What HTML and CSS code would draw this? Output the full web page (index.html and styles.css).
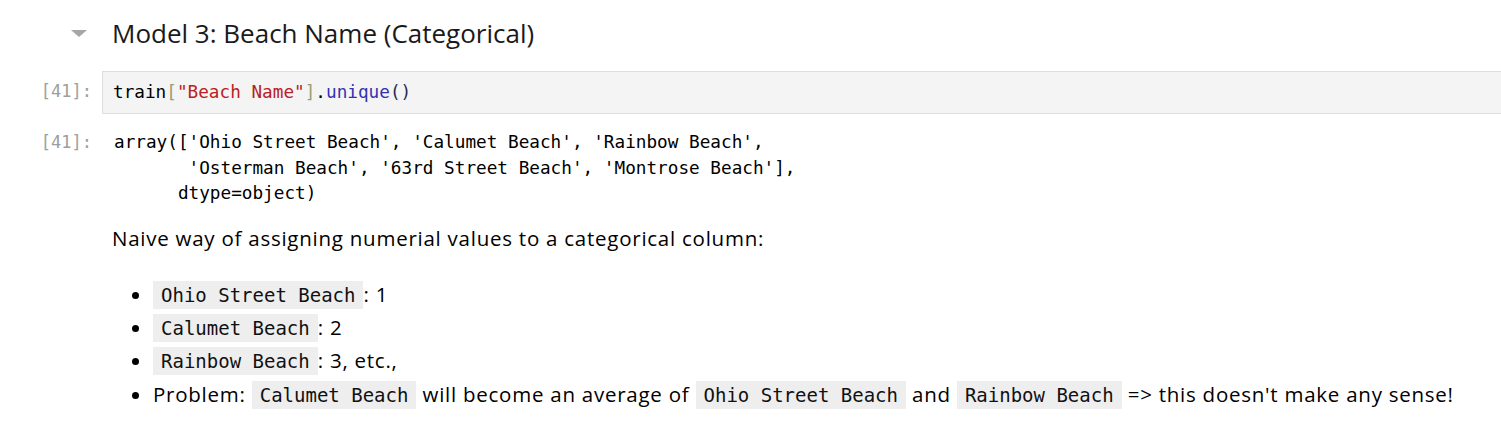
FILE: index.html
```html
<!DOCTYPE html>
<html>
<head>
<meta charset="utf-8">
<link rel="stylesheet" href="styles.css">
</head>
<body>
<div class="notebook">
  <div class="cell heading-cell">
    <div class="prompt"><span class="collapser"></span></div>
    <h2 class="heading">Model 3: Beach Name (Categorical)</h2>
  </div>

  <div class="cell code-cell">
    <div class="prompt">[41]:</div>
    <div class="code-box"><pre class="code"><span class="v">train</span><span class="br">[</span><span class="s">"Beach Name"</span><span class="br">]</span><span class="op">.</span><span class="fn">unique</span><span class="pa">()</span></pre></div>
  </div>

  <div class="cell output-cell">
    <div class="prompt">[41]:</div>
    <pre class="output">array(['Ohio Street Beach', 'Calumet Beach', 'Rainbow Beach',
       'Osterman Beach', '63rd Street Beach', 'Montrose Beach'],
      dtype=object)</pre>
  </div>

  <div class="cell md-cell">
    <div class="prompt"></div>
    <div class="md">
      <p class="para">Naive way of assigning numerial values to a categorical column:</p>
      <ul class="list">
        <li><code>Ohio Street Beach</code>: 1</li>
        <li><code>Calumet Beach</code>: 2</li>
        <li><code>Rainbow Beach</code>: 3, etc.,</li>
        <li>Problem: <code>Calumet Beach</code> will become an average of <code>Ohio Street Beach</code> and <code>Rainbow Beach</code> =&gt; this doesn't make any sense!</li>
      </ul>
    </div>
  </div>
</div>
</body>
</html>
```

FILE: styles.css
```css
html, body {
  margin: 0;
  padding: 0;
  background: #ffffff;
}

body {
  font-family: "Open Sans", "Noto Sans", sans-serif;
  color: #1a1a1a;
  overflow: hidden;
}

.notebook {
  display: flex;
  flex-direction: column;
  padding-top: 12px;
}

.cell {
  display: flex;
  align-items: flex-start;
}

.prompt {
  width: 92px;
  flex: none;
  padding-right: 10px;
  text-align: right;
  font-family: "DejaVu Sans Mono", monospace;
  font-size: 17px;
  color: #9e9e9e;
  box-sizing: content-box;
}

.heading-cell .prompt {
  display: flex;
  justify-content: flex-start;
  height: 42px;
  align-items: center;
}

.collapser {
  display: block;
  margin-left: 71px;
  margin-top: 1px;
  width: 0;
  height: 0;
  border-left: 8px solid transparent;
  border-right: 8px solid transparent;
  border-top: 7px solid #a6a6a6;
}

.heading {
  margin: 0;
  padding-left: 10px;
  font-weight: 400;
  font-size: 26px;
  line-height: 42px;
  color: #1a1a1a;
}

.code-cell {
  margin-top: 17px;
}

.code-cell .prompt {
  line-height: 41px;
}

.code-box {
  flex: 1;
  background: #f4f4f4;
  border: 1px solid #dedede;
  border-right: none;
  height: 41px;
  display: flex;
  align-items: center;
  padding-left: 10px;
}

.code {
  margin: 0;
  font-family: "DejaVu Sans Mono", monospace;
  font-size: 17.7px;
  line-height: 25px;
  color: #000;
}

.v { color: #000000; }
.br { color: #9c9c6e; }
.s { color: #ba2121; }
.op { color: #000000; }
.fn { color: #3232b0; }
.pa { color: #2a2a55; }

.output-cell {
  margin-top: 16px;
}

.output-cell .prompt {
  line-height: 25px;
}

.output {
  margin: 0;
  padding-left: 12px;
  font-family: "DejaVu Sans Mono", monospace;
  font-size: 17.7px;
  line-height: 25.5px;
  color: #000;
}

.md-cell {
  margin-top: 17px;
}

.md {
  padding-left: 10px;
  font-size: 20.5px;
  letter-spacing: 0.75px;
  color: #000;
}

.para {
  margin: 0;
  line-height: 28px;
}

.list {
  margin: 26px 0 0 0;
  padding-left: 41px;
  line-height: 33px;
}

.list li {
  height: 33px;
}

.list li:last-child {
  margin-top: 1px;
}

code {
  font-family: "DejaVu Sans Mono", monospace;
  font-size: 19px;
  letter-spacing: 0;
  background: #eeeeee;
  padding: 3px 8px 3px 8px;
  color: #111;
}
```
